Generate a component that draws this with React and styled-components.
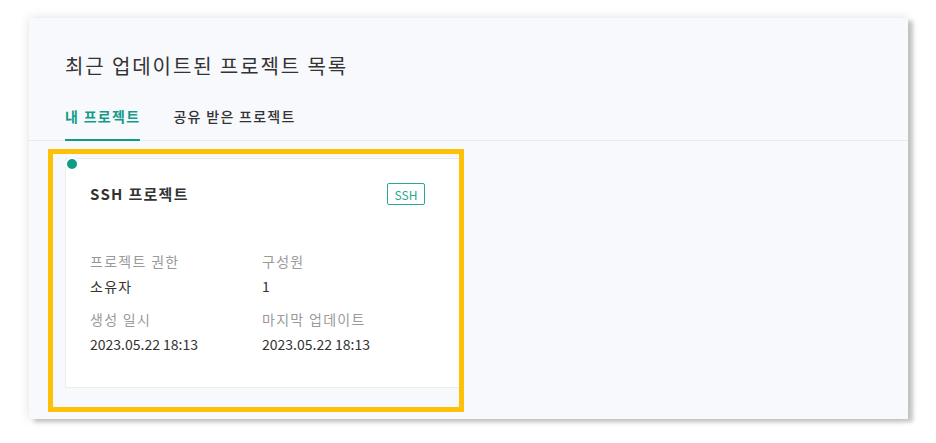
import React, { useState } from "react";
import styled, { createGlobalStyle } from "styled-components";

const GlobalStyle = createGlobalStyle`
  html, body {
    margin: 0;
    padding: 0;
    background: #ffffff;
  }
  body {
    font-family: "Noto Sans CJK KR", "Noto Sans", sans-serif;
    color: #333;
  }
`;

const Page = styled.div`
  padding: 18px 28px 24px 29px;
`;

const Panel = styled.section`
  height: 401px;
  background: #f8f9fd;
  box-shadow: 5px 3px 4px rgba(0, 0, 0, 0.2), 0 0 10px rgba(0, 0, 0, 0.12);
  display: flex;
  flex-direction: column;
  overflow: hidden;
`;

const Title = styled.h2`
  margin: 0;
  padding: 34px 36px 0;
  font-size: 20px;
  line-height: 28px;
  font-weight: 400;
  letter-spacing: 1.9px;
  color: #333;
`;

const TabBar = styled.div`
  display: flex;
  gap: 33px;
  margin-top: 26px;
  padding: 0 36px;
  border-bottom: 1px solid #e9eaef;
`;

const Tab = styled.button`
  all: unset;
  cursor: pointer;
  font-size: 14px;
  line-height: 20px;
  letter-spacing: 1.3px;
  font-weight: ${({ active }) => (active ? 700 : 500)};
  color: ${({ active }) => (active ? "#129b89" : "#333")};
  padding-bottom: 13px;
  margin-bottom: -1px;
  border-bottom: 2px solid ${({ active }) => (active ? "#0e9b87" : "transparent")};
`;

const Content = styled.div`
  padding: 8px 0 0 19px;
`;

const Highlight = styled.div`
  width: 416px;
  box-sizing: border-box;
  border: 5px solid #fec107;
  padding: 4px 0 19px 12px;
  overflow: hidden;
`;

const Card = styled.article`
  position: relative;
  width: 400px;
  height: 230px;
  box-sizing: border-box;
  background: #fff;
  border: 1px solid #ececec;
  padding: 24px 33px 0 24px;
`;

const Dot = styled.span`
  position: absolute;
  left: -1px;
  top: -2px;
  width: 10px;
  height: 10px;
  border-radius: 50%;
  background: #0f9c86;
  border: 2px solid #fff;
`;

const CardHead = styled.div`
  display: flex;
  justify-content: space-between;
  align-items: flex-start;
  padding-right: 6px;
`;

const CardTitle = styled.h3`
  margin: 0;
  font-size: 15px;
  line-height: 22px;
  font-weight: 700;
  letter-spacing: 1.3px;
  color: #333;
`;

const Badge = styled.span`
  width: 38px;
  height: 22px;
  box-sizing: border-box;
  border: 1px solid #2aa893;
  border-radius: 2px;
  display: flex;
  align-items: center;
  justify-content: center;
  font-size: 12px;
  color: #28a692;
`;

const InfoGrid = styled.dl`
  margin: 46px 0 0;
  display: grid;
  grid-template-columns: 172px 1fr;
  row-gap: 13px;
`;

const InfoItem = styled.div`
  display: flex;
  flex-direction: column;
  gap: 5px;
`;

const Label = styled.dt`
  font-size: 14px;
  line-height: 20px;
  letter-spacing: 1.3px;
  color: #9a9a9a;
`;

const Value = styled.dd`
  margin: 0;
  font-size: 14px;
  line-height: 20px;
  color: #333;
  letter-spacing: ${({ korean }) => (korean ? "1.3px" : "0")};
`;

const info = [
  { label: "프로젝트 권한", value: "소유자", korean: true },
  { label: "구성원", value: "1" },
  { label: "생성 일시", value: "2023.05.22 18:13" },
  { label: "마지막 업데이트", value: "2023.05.22 18:13" },
];

const App = () => {
  const [tab, setTab] = useState(0);

  return (
    <>
      <GlobalStyle />
      <Page>
        <Panel>
          <Title>최근 업데이트된 프로젝트 목록</Title>
          <TabBar>
            <Tab active={tab === 0} onClick={() => setTab(0)}>
              내 프로젝트
            </Tab>
            <Tab active={tab === 1} onClick={() => setTab(1)}>
              공유 받은 프로젝트
            </Tab>
          </TabBar>
          <Content>
            <Highlight>
              <Card>
                <Dot />
                <CardHead>
                  <CardTitle>SSH 프로젝트</CardTitle>
                  <Badge>SSH</Badge>
                </CardHead>
                <InfoGrid>
                  {info.map((item) => (
                    <InfoItem key={item.label}>
                      <Label>{item.label}</Label>
                      <Value korean={item.korean}>{item.value}</Value>
                    </InfoItem>
                  ))}
                </InfoGrid>
              </Card>
            </Highlight>
          </Content>
        </Panel>
      </Page>
    </>
  );
};

export default App;
